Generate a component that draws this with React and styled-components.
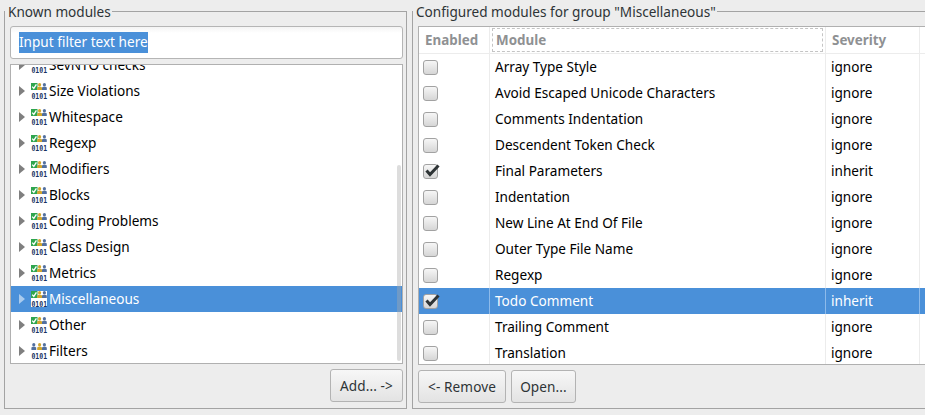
import React from 'react';
import styled, { createGlobalStyle } from 'styled-components';

const GlobalStyle = createGlobalStyle`
  html, body {
    margin: 0;
    padding: 0;
    background: #ededed;
  }
  body {
    font-family: "Noto Sans", "DejaVu Sans", sans-serif;
    font-size: 13.6px;
    line-height: 20px;
    color: #2e3436;
  }
`;

const Page = styled.div`
  width: 925px;
  height: 415px;
  overflow: hidden;
  display: flex;
  gap: 5px;
  padding: 1px 0 0 4px;
  box-sizing: border-box;
  background: #ededed;
`;

const Group = styled.fieldset`
  flex: none;
  width: ${p => p.$width}px;
  height: 408px;
  box-sizing: border-box;
  margin: 0;
  padding: 5px 3px 4px 5px;
  border: 1px solid #a3a3a3;
  min-width: 0;
  display: flex;
  flex-direction: column;
`;

const GroupTitle = styled.legend`
  margin-left: -5px;
  padding: 0 1px 0 3px;
  height: 20px;
  line-height: 21px;
  font-size: 13.6px;
  color: #2e3436;
`;

const FilterBox = styled.div`
  height: 33px;
  box-sizing: border-box;
  border: 1px solid #b5b5b5;
  border-radius: 3px;
  background: linear-gradient(#f4f4f4, #ffffff 6px);
  padding: 5px 8px;
  display: flex;
  align-items: stretch;
`;

const SelectedText = styled.span`
  background: #4a90d9;
  color: #ffffff;
  font-size: 13.6px;
`;

const TreePanel = styled.div`
  position: relative;
  margin-top: 5px;
  height: 300px;
  box-sizing: border-box;
  border: 1px solid #b0b0b0;
  background: #ffffff;
  overflow: hidden;
`;

const TreeList = styled.div`
  margin-top: -13px;
`;

const TreeRow = styled.div`
  height: 26px;
  display: flex;
  align-items: center;
  padding-left: 8px;
  background: ${p => (p.$selected ? '#4a90d9' : 'transparent')};
  color: ${p => (p.$selected ? '#ffffff' : '#000000')};
`;

const Arrow = styled.span`
  width: 0;
  height: 0;
  margin-right: 6px;
  border-style: solid;
  border-width: 5px 0 5px 6px;
  border-color: transparent transparent transparent ${p => (p.$selected ? '#a9cbee' : '#7f7f7f')};
`;

const Label = styled.span`
  margin-left: 2px;
  font-size: 13.6px;
`;

const ScrollThumb = styled.div`
  position: absolute;
  top: 100px;
  right: 1px;
  width: 4px;
  height: 196px;
  border-radius: 2px;
  background: rgba(170, 170, 170, 0.4);
`;

const ButtonRow = styled.div`
  display: flex;
  justify-content: ${p => (p.$end ? 'flex-end' : 'flex-start')};
  gap: 5px;
  margin-top: 5px;
`;

const Button = styled.button`
  height: 33px;
  width: ${p => p.$width}px;
  box-sizing: border-box;
  padding: 0;
  border: 1px solid #b3b3b3;
  border-radius: 3px;
  background: linear-gradient(#f7f7f7, #e3e3e3);
  color: #2e3436;
  font-family: inherit;
  font-size: 13.6px;
  letter-spacing: 0.1px;
`;

const TablePanel = styled.div`
  height: 339px;
  box-sizing: border-box;
  border: 1px solid #b0b0b0;
  border-right: none;
  background: #ffffff;
  overflow: hidden;
`;

const HeaderRow = styled.div`
  display: grid;
  grid-template-columns: 71px 336px 94px 1fr;
  height: 27px;
  box-sizing: border-box;
  border-bottom: 1px solid #ececec;
`;

const HeaderCell = styled.div`
  display: flex;
  align-items: center;
  padding-left: ${p => p.$pad}px;
  border-right: 1px solid #ececec;
  color: #8f9193;
  font-weight: 700;
  font-size: 13.4px;
`;

const FocusBox = styled.div`
  flex: 1;
  display: flex;
  align-items: center;
  height: 22px;
  margin: 0 2px 0 2px;
  padding-left: 3px;
  border: 1px dashed #c4c4c4;
`;

const Row = styled.div`
  display: grid;
  grid-template-columns: 71px 336px 94px 1fr;
  height: 26px;
  background: ${p => (p.$selected ? '#4a90d9' : 'transparent')};
  color: ${p => (p.$selected ? '#ffffff' : '#000000')};
`;

const Cell = styled.div`
  display: flex;
  align-items: center;
  padding-left: ${p => p.$pad}px;
  border-right: 1px solid ${p => (p.$selected ? '#8dbaea' : '#ececec')};
  font-size: 13.6px;
`;

const Check = styled.span`
  position: relative;
  width: 15px;
  height: 15px;
  box-sizing: border-box;
  border: 1px solid #a2a2a2;
  border-radius: 3px;
  background: linear-gradient(#f6f6f6, #d6d6d6);
`;

const CheckSvg = styled.svg`
  position: absolute;
  left: 1px;
  top: -1px;
  overflow: visible;
`;

const IconSvg = styled.svg`
  flex: none;
  overflow: visible;
`;

const Person = ({ x, color }) => (
  <g fill={color}>
    <circle cx={x} cy="1.7" r="1.6" />
    <path d={`M${x - 2.4} 7 L${x - 2.4} 4.6 Q${x} 2.6 ${x + 2.4} 4.6 L${x + 2.4} 7 Z`} />
  </g>
);

const ModuleIcon = ({ plain }) => (
  <IconSvg width="16" height="16" viewBox="0 0 16 16">
    <rect x="0" y="0" width="16" height="16" fill="#ffffff" />
    {plain ? (
      <Person x={2.8} color="#52709f" />
    ) : (
      <g>
        <rect x="0" y="0" width="6.5" height="7" fill="#2fa54e" />
        <path d="M1.2 3.6 L2.8 5.4 L5.4 1.4" fill="none" stroke="#ffffff" strokeWidth="1.3" />
      </g>
    )}
    <Person x={8.6} color="#d2a62c" />
    <Person x={13.4} color="#52709f" />
    <text
      transform="translate(0.4 15.5) scale(0.88 1.1)"
      fontFamily="'DejaVu Sans Mono', monospace"
      fontWeight="700"
      fontSize="7.4"
      letterSpacing="0"
      fill="#17325f"
    >
      0101
    </text>
  </IconSvg>
);

const CheckMark = () => (
  <CheckSvg width="15" height="13" viewBox="0 0 15 13">
    <path d="M1.5 6.5 L5 10.5 L13.5 1.5" fill="none" stroke="#2e3436" strokeWidth="3" />
  </CheckSvg>
);

const modules = [
  { name: 'SevNTO checks' },
  { name: 'Size Violations' },
  { name: 'Whitespace' },
  { name: 'Regexp' },
  { name: 'Modifiers' },
  { name: 'Blocks' },
  { name: 'Coding Problems' },
  { name: 'Class Design' },
  { name: 'Metrics' },
  { name: 'Miscellaneous', selected: true },
  { name: 'Other' },
  { name: 'Filters', plain: true }
];

const configured = [
  { name: 'Array Type Style', severity: 'ignore' },
  { name: 'Avoid Escaped Unicode Characters', severity: 'ignore' },
  { name: 'Comments Indentation', severity: 'ignore' },
  { name: 'Descendent Token Check', severity: 'ignore' },
  { name: 'Final Parameters', severity: 'inherit', checked: true },
  { name: 'Indentation', severity: 'ignore' },
  { name: 'New Line At End Of File', severity: 'ignore' },
  { name: 'Outer Type File Name', severity: 'ignore' },
  { name: 'Regexp', severity: 'ignore' },
  { name: 'Todo Comment', severity: 'inherit', checked: true, selected: true },
  { name: 'Trailing Comment', severity: 'ignore' },
  { name: 'Translation', severity: 'ignore' }
];

export default function App() {
  return (
    <Page>
      <GlobalStyle />
      <Group $width={403}>
        <GroupTitle>Known modules</GroupTitle>
        <FilterBox>
          <SelectedText>Input filter text here</SelectedText>
        </FilterBox>
        <TreePanel>
          <TreeList>
            {modules.map(m => (
              <TreeRow key={m.name} $selected={m.selected}>
                <Arrow $selected={m.selected} />
                <ModuleIcon plain={m.plain} />
                <Label>{m.name}</Label>
              </TreeRow>
            ))}
          </TreeList>
          <ScrollThumb />
        </TreePanel>
        <ButtonRow $end>
          <Button $width={73}>Add... -&gt;</Button>
        </ButtonRow>
      </Group>
      <Group $width={530}>
        <GroupTitle>Configured modules for group "Miscellaneous"</GroupTitle>
        <TablePanel>
          <HeaderRow>
            <HeaderCell $pad={6}>Enabled</HeaderCell>
            <HeaderCell $pad={0}>
              <FocusBox>Module</FocusBox>
            </HeaderCell>
            <HeaderCell $pad={6}>Severity</HeaderCell>
            <HeaderCell $pad={6} />
          </HeaderRow>
          {configured.map(c => (
            <Row key={c.name} $selected={c.selected}>
              <Cell $pad={4} $selected={c.selected}>
                <Check>{c.checked && <CheckMark />}</Check>
              </Cell>
              <Cell $pad={5} $selected={c.selected}>{c.name}</Cell>
              <Cell $pad={5} $selected={c.selected}>{c.severity}</Cell>
              <Cell $pad={5} $selected={c.selected} />
            </Row>
          ))}
        </TablePanel>
        <ButtonRow>
          <Button $width={88}>&lt;- Remove</Button>
          <Button $width={65}>Open...</Button>
        </ButtonRow>
      </Group>
    </Page>
  );
}
